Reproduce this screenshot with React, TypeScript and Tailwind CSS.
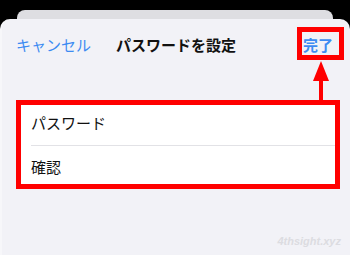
import React from 'react';

const font = { fontFamily: '"Noto Sans CJK JP", "Noto Sans", sans-serif' };

const App: React.FC = () => {
  return (
    <div
      className="relative w-[350px] h-[255px] bg-black flex flex-col overflow-hidden"
      style={font}
    >
      {/* back card peeking out */}
      <div className="mt-[10px] mx-[17px] mr-[17px] h-[14px] rounded-t-[8px] bg-[#dedee2] shrink-0" />

      {/* sheet */}
      <div className="-mt-[5px] flex-1 rounded-t-[10px] bg-[#f2f2f7] border-l-[2px] border-[#f7f7fa] flex flex-col">
        <div className="h-[52px] grid grid-cols-[1fr_auto_1fr] items-center">
          <span className="pl-[14px] text-[15px] text-[#3d8bf2]">キャンセル</span>
          <span className="text-[15px] font-bold text-[#111]">パスワードを設定</span>
          <span className="pr-[17px] text-right text-[15px] font-bold text-[#3d8bf2]">完了</span>
        </div>

        <div className="mt-[30px] ml-[14px] mr-[15px] bg-white">
          <div className="h-[44px] flex items-center pl-[15px] text-[15px] text-[#111]">
            パスワード
          </div>
          <div className="ml-[15px] h-px bg-[#e2e2e6]" />
          <div className="h-[43px] flex items-center pl-[15px] text-[15px] text-[#111]">
            確認
          </div>
        </div>

        <div className="mt-auto mb-[6px] pr-[9px] text-right text-[11px] font-bold italic text-[#dcdce1]" style={{ fontFamily: '"Liberation Sans", sans-serif' }}>
          4thsight.xyz
        </div>
      </div>

      {/* annotations */}
      <div className="absolute left-[297px] top-[27px] w-[47px] h-[33px] border-[5px] border-[#ff0000]" />
      <div className="absolute left-[16px] top-[100px] w-[324px] h-[89px] border-[5px] border-[#ff0000]" />
      <svg className="absolute left-[311px] top-[59px]" width="20" height="43" viewBox="0 0 20 43">
        <polygon points="10,2 18,22 2,22" fill="#ff0000" />
        <rect x="8" y="20" width="4" height="23" fill="#ff0000" />
      </svg>
    </div>
  );
};

export default App;
